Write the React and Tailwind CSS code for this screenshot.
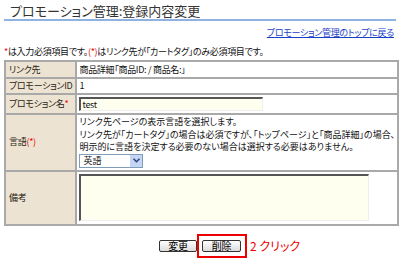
import React from 'react';

const jp = { fontFamily: '"Noto Sans CJK JP", sans-serif', fontFeatureSettings: '"palt"' };

function Req() {
  return <span className="text-[#e00]">*</span>;
}

function ReqParen() {
  return <span className="text-[#e00]">(*)</span>;
}

export default function App() {
  const th = 'bg-[#ede3d3] border-2 border-[#a9a9a9] px-[3px] py-0 text-left font-normal text-[#2a1f14] align-middle whitespace-nowrap';
  const td = 'border-2 border-[#a9a9a9] px-[2px] py-0 text-[#111] align-middle whitespace-nowrap';

  return (
    <div className="w-[400px] h-[259px] bg-white overflow-hidden text-[9px] leading-[12px] tracking-[-0.3px]" style={jp}>
      {/* Title */}
      <div className="px-[4px] pt-[3px]">
        <h1 className="pl-[6px] text-[13px] leading-[15px] text-[#333] font-normal tracking-[0px]">
          プロモーション管理:登録内容変更
        </h1>
        <div className="mt-[1px] h-[2px] bg-[#8fb2e0]" />
      </div>

      <div className="flex justify-end pr-[6px] mt-[6px]">
        <a href="#" className="text-[#1a3fc7] underline">プロモーション管理のトップに戻る</a>
      </div>

      <div className="px-[4px] mt-[7px] text-[#111]">
        <Req />は入力必須項目です。<ReqParen />はリンク先が「カートタグ」のみ必須項目です。
      </div>

      <table className="ml-[4px] mt-[2px] w-[391px] border-collapse border-2 border-[#a9a9a9]">
        <tbody>
          <tr className="h-[17px]">
            <th className={`${th} w-[67px]`}>リンク先</th>
            <td className={td}>商品詳細「商品ID: / 商品名:」</td>
          </tr>
          <tr className="h-[16px]">
            <th className={th}>プロモーションID</th>
            <td className={td}>1</td>
          </tr>
          <tr className="h-[20px]">
            <th className={th}>プロモション名<Req /></th>
            <td className={td}>
              <input
                defaultValue="test"
                className="block w-[184px] h-[14px] bg-[#fffff0] border-t-2 border-l-2 border-[#555] border-r border-b border-r-[#eee] border-b-[#eee] px-[1px] text-[9px] outline-none"
                style={jp}
              />
            </td>
          </tr>
          <tr className="h-[56px]">
            <th className={th}>言語<ReqParen /></th>
            <td className={`${td} pt-[1px] pb-[2px] tracking-[0px]`}>
              <div className="leading-[12.5px]">リンク先ページの表示言語を選択します。</div>
              <div className="leading-[12.5px]">リンク先が「カートタグ」の場合は必須ですが、「トップページ」と「商品詳細」の場合、</div>
              <div className="leading-[12.5px]">明示的に言語を決定する必要のない場合は選択する必要はありません。</div>
              <div className="w-[64px] h-[14px] flex items-center border border-[#7f9db9] bg-white">
                <span className="flex-1 pl-[3px]">英語</span>
                <span className="w-[12px] h-[12px] bg-[#c5d5f5] flex items-center justify-center">
                  <svg width="7" height="5" viewBox="0 0 7 5"><path d="M0.5 0.8 L3.5 3.8 L6.5 0.8" stroke="#2a3f7a" strokeWidth="1.5" fill="none" /></svg>
                </span>
              </div>
            </td>
          </tr>
          <tr className="h-[54px]">
            <th className={th}>備考</th>
            <td className={`${td} py-[2px]`}>
              <div className="w-[290px] h-[47px] bg-[#fffff0] border-t-2 border-l-2 border-[#555] border-r border-b border-r-[#eee] border-b-[#eee]" />
            </td>
          </tr>
        </tbody>
      </table>

      <div className="flex items-center mt-[8px] ml-[159px]">
        <button className="w-[38px] h-[12px] flex items-center justify-center rounded-[2px] border border-[#333] bg-gradient-to-b from-white to-[#dcdcdc] text-[10px] leading-none" style={jp}>変更</button>
        <div className="p-[4px] pl-[3px] border-2 border-[#e00]">
          <button className="w-[39px] h-[12px] flex items-center justify-center rounded-[2px] border border-[#333] bg-gradient-to-b from-white to-[#dcdcdc] text-[10px] leading-none" style={jp}>削除</button>
        </div>
        <span className="ml-[3px] text-[#e00] text-[12px] tracking-[0px]">2 クリック</span>
      </div>
    </div>
  );
}
